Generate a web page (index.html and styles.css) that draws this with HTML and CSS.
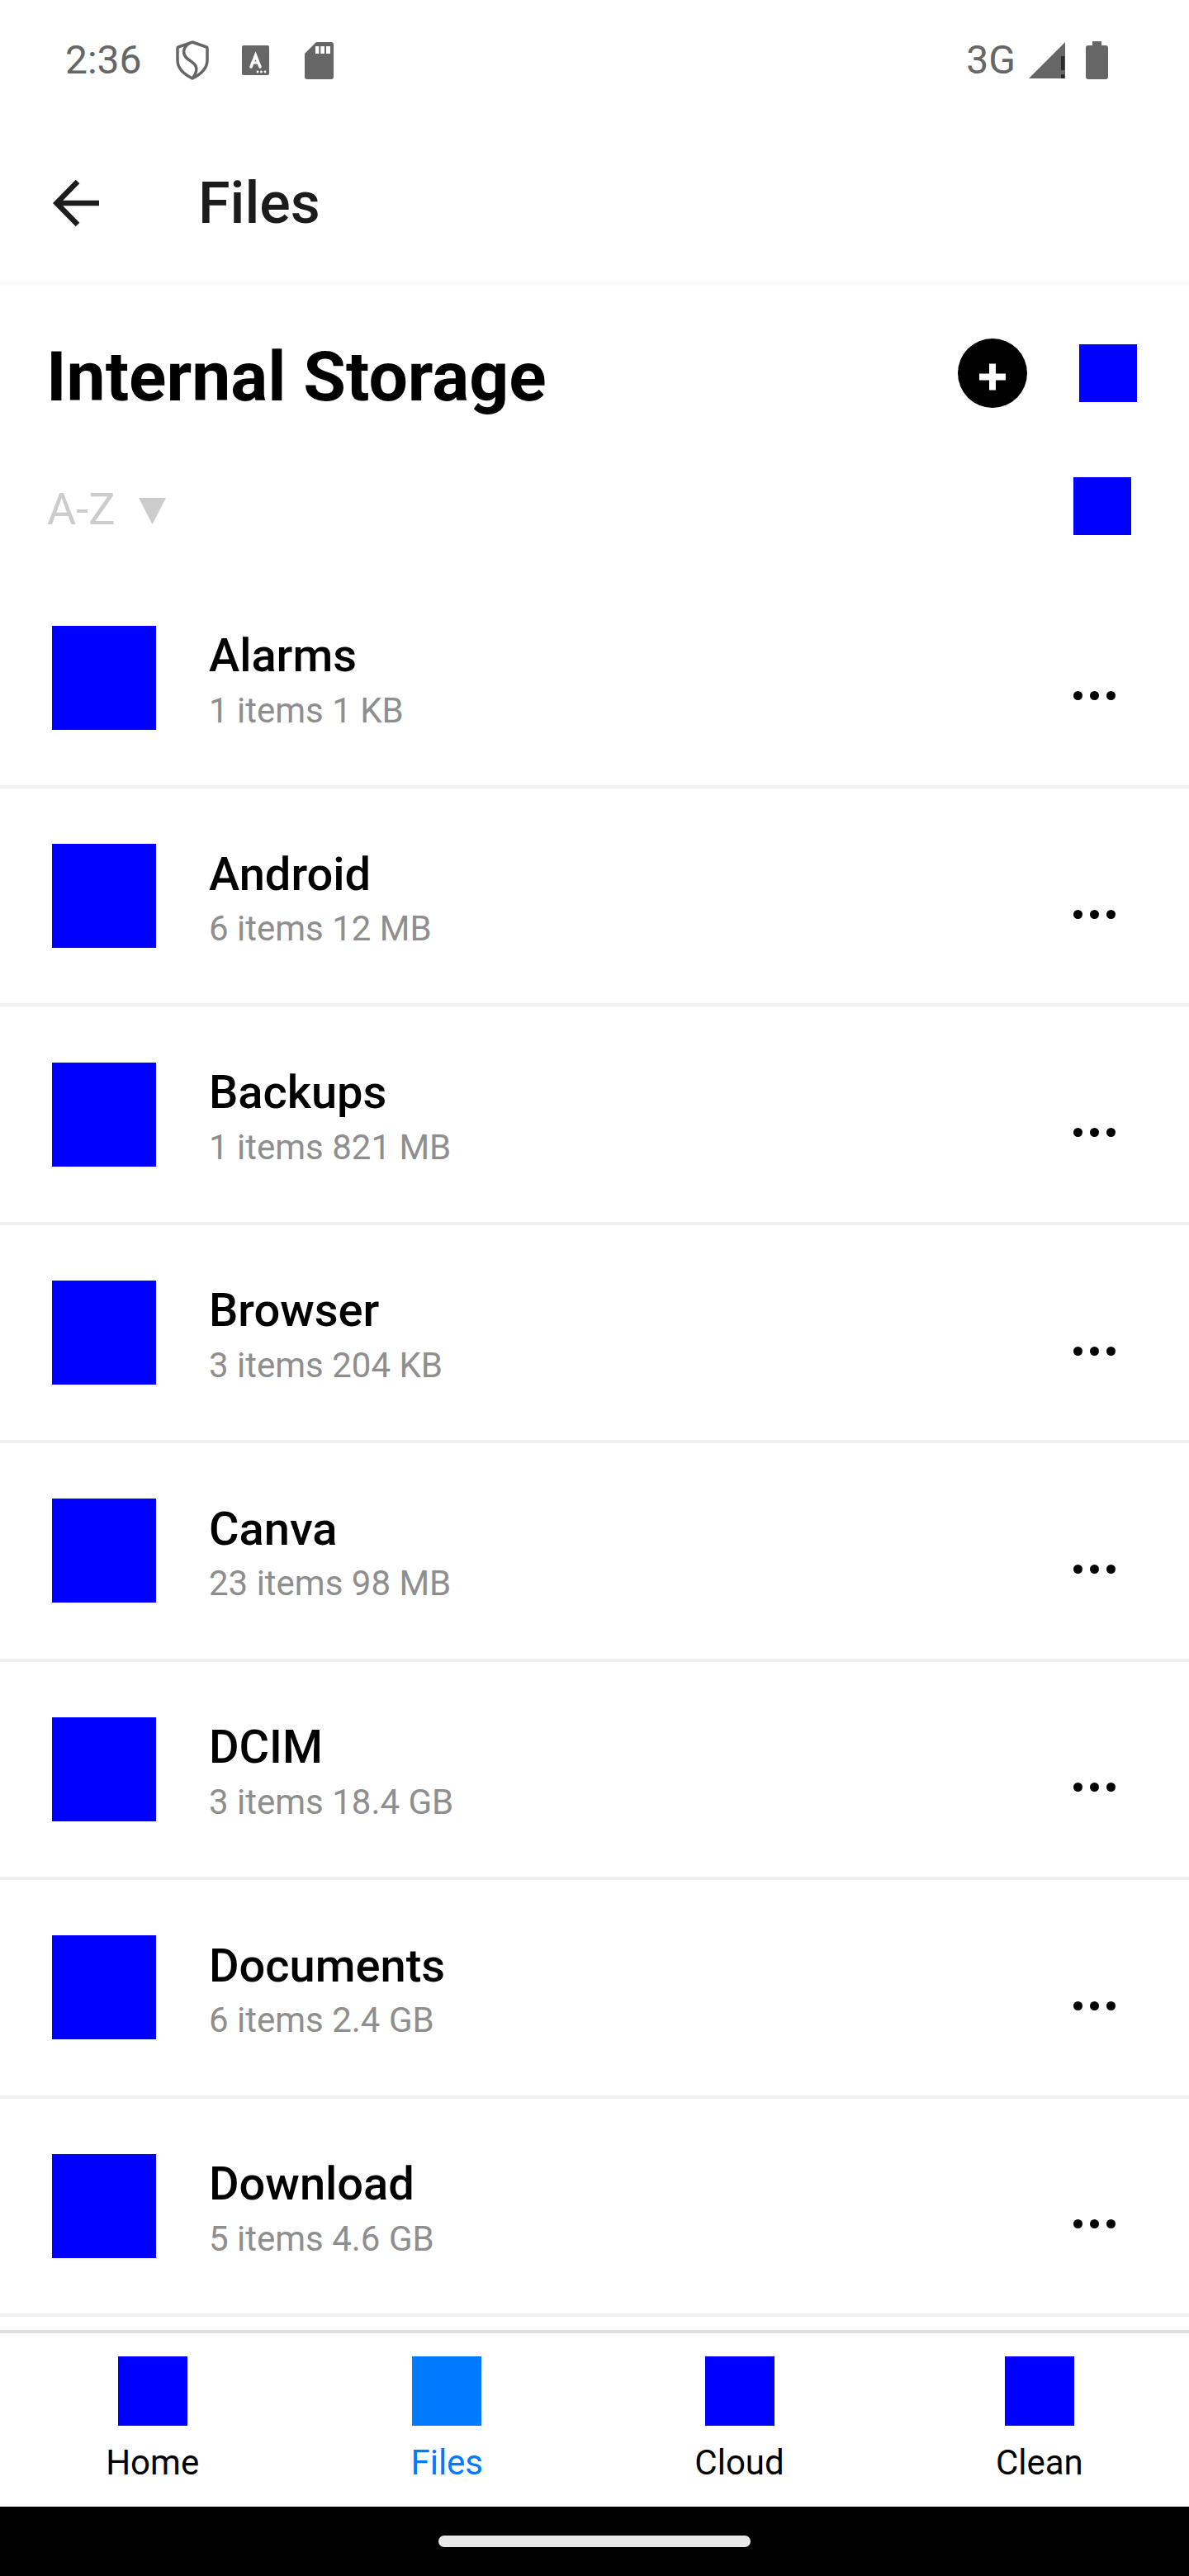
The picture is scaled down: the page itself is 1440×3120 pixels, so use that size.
FILE: index.html
```html
<!DOCTYPE html>
<html lang="en">
<head>
    <meta charset="UTF-8">
    <meta name="viewport" content="width=device-width, initial-scale=1.0">
    <title>Files</title>
    <link rel="stylesheet" href="styles.css">
</head>
<body>
    <div class="screen">
        <div class="status-bar">
            <div class="status-left">
                <span class="status-text">2:36</span>
                <svg class="ic-shield" viewBox="0 0 40 48"><path d="M20 2 37 8c1 0 1 1 1 2v14c0 10-8 17-18 22C10 41 2 34 2 24V10c0-1 0-2 1-2z" fill="none" stroke="#666" stroke-width="3.5"/><path d="M17 3C8 8 7 17 15 23c8 5 15 10 5 23" fill="none" stroke="#666" stroke-width="3.5"/></svg>
                <svg class="ic-keyboard" viewBox="0 0 33 36"><rect width="33" height="36" rx="2" fill="#666"/><path d="M11 26 16.500 12 22 26" fill="none" stroke="#fff" stroke-width="3.500" stroke-linecap="round"/><path d="M12.500 21h8" stroke="#fff" stroke-width="3"/><circle cx="19" cy="32" r="1.400" fill="#fff"/><circle cx="23.500" cy="32" r="1.400" fill="#fff"/><circle cx="28" cy="32" r="1.400" fill="#fff"/></svg>
                <svg class="ic-sd" viewBox="0 0 35 45"><path d="M14 0h18a3 3 0 0 1 3 3v39a3 3 0 0 1-3 3H3a3 3 0 0 1-3-3V14z" fill="#666"/><path d="M13 5h4.300v9H13zM19.300 5H24v9h-4.700zM26 5h5v9h-5z" fill="#fff"/></svg>
            </div>
            <div class="status-right">
                <span class="status-text">3G</span>
                <svg class="ic-signal" viewBox="0 0 44 44"><path d="M44 0v44H0z" fill="#666"/><path d="M39 17h4.300v17H39zM39 39h4.300v5H39z" fill="#2b2b2b"/></svg>
                <svg class="ic-battery" viewBox="0 0 27 46"><path d="M8 0h11v5h5a3 3 0 0 1 3 3v35a3 3 0 0 1-3 3H3a3 3 0 0 1-3-3V8a3 3 0 0 1 3-3h5z" fill="#666"/></svg>
            </div>
        </div>

        <div class="app-bar">
            <svg class="ic-back" viewBox="0 0 56 56"><path d="M56 28H5M30 2 4.500 28 30 54" fill="none" stroke="#1c1c1c" stroke-width="6.500"/></svg>
            <span class="app-title">Files</span>
        </div>

        <div class="page-head">
            <h1>Internal Storage</h1>
            <div class="add-btn"><svg viewBox="0 0 32 32"><path d="M12 0h8v12h12v8H20v12h-8V20H0v-8h12z" fill="#fff"/></svg></div>
            <div class="blue-box head-box"></div>
        </div>

        <div class="sort-row">
            <span class="sort-label">A-Z</span>
            <svg class="sort-caret" viewBox="0 0 33 32"><path d="M0 0h33L16.500 32z" fill="#ccc"/></svg>
            <div class="blue-box sort-box"></div>
        </div>

        <div class="file-list">
            <div class="file-row">
                <div class="blue-box file-icon"></div>
                <div class="file-info"><div class="file-name">Alarms</div><div class="file-meta">1 items 1 KB</div></div>
                <div class="more"><i></i><i></i><i></i></div>
            </div>
            <div class="file-row">
                <div class="blue-box file-icon"></div>
                <div class="file-info"><div class="file-name">Android</div><div class="file-meta">6 items 12 MB</div></div>
                <div class="more"><i></i><i></i><i></i></div>
            </div>
            <div class="file-row">
                <div class="blue-box file-icon"></div>
                <div class="file-info"><div class="file-name">Backups</div><div class="file-meta">1 items 821 MB</div></div>
                <div class="more"><i></i><i></i><i></i></div>
            </div>
            <div class="file-row">
                <div class="blue-box file-icon"></div>
                <div class="file-info"><div class="file-name">Browser</div><div class="file-meta">3 items 204 KB</div></div>
                <div class="more"><i></i><i></i><i></i></div>
            </div>
            <div class="file-row">
                <div class="blue-box file-icon"></div>
                <div class="file-info"><div class="file-name">Canva</div><div class="file-meta">23 items 98 MB</div></div>
                <div class="more"><i></i><i></i><i></i></div>
            </div>
            <div class="file-row">
                <div class="blue-box file-icon"></div>
                <div class="file-info"><div class="file-name">DCIM</div><div class="file-meta">3 items 18.4 GB</div></div>
                <div class="more"><i></i><i></i><i></i></div>
            </div>
            <div class="file-row">
                <div class="blue-box file-icon"></div>
                <div class="file-info"><div class="file-name">Documents</div><div class="file-meta">6 items 2.4 GB</div></div>
                <div class="more"><i></i><i></i><i></i></div>
            </div>
            <div class="file-row">
                <div class="blue-box file-icon"></div>
                <div class="file-info"><div class="file-name">Download</div><div class="file-meta">5 items 4.6 GB</div></div>
                <div class="more"><i></i><i></i><i></i></div>
            </div>
        </div>

        <div class="bottom-nav">
            <div class="nav-item"><div class="blue-box nav-icon"></div><span>Home</span></div>
            <div class="nav-item active"><div class="blue-box nav-icon"></div><span>Files</span></div>
            <div class="nav-item"><div class="blue-box nav-icon"></div><span>Cloud</span></div>
            <div class="nav-item"><div class="blue-box nav-icon"></div><span>Clean</span></div>
        </div>

        <div class="gesture-bar"><div class="gesture-handle"></div></div>
    </div>
</body>
</html>
```

FILE: styles.css
```css
* {
    box-sizing: border-box;
}
body {
    margin: 0;
    background: #fff;
    font-family: Roboto, "Liberation Sans", sans-serif;
    color: #000;
}
.screen {
    width: 1440px;
    height: 3120px;
    display: flex;
    flex-direction: column;
    overflow: hidden;
}
.blue-box {
    background: #0000ff;
    flex: none;
}

/* status bar */
.status-bar {
    height: 130px;
    padding: 16px 98px 0 79px;
    display: flex;
    justify-content: space-between;
    align-items: center;
}
.status-left,
.status-right {
    display: flex;
    align-items: center;
}
.status-text {
    font-size: 48px;
    line-height: 48px;
    color: #666;
}
.ic-shield {
    width: 40px;
    height: 48px;
    margin-left: 41px;
}
.ic-keyboard {
    width: 33px;
    height: 36px;
    margin-left: 40px;
}
.ic-sd {
    width: 35px;
    height: 45px;
    margin-left: 43px;
}
.ic-signal {
    width: 44px;
    height: 44px;
    margin-left: 16px;
}
.ic-battery {
    width: 27px;
    height: 46px;
    margin-left: 25px;
}

/* app bar */
.app-bar {
    height: 215px;
    display: flex;
    align-items: center;
    padding: 21px 0 0 64px;
    border-bottom: 5px solid #fafafa;
}
.ic-back {
    width: 56px;
    height: 56px;
}
.app-title {
    margin-left: 120px;
    font-size: 70px;
    font-weight: 500;
    color: #1c1c1c;
}

/* title and sort */
.page-head {
    height: 214px;
    display: flex;
    align-items: center;
    padding: 0 63px 0 56px;
}
.page-head h1 {
    margin: 8px auto 0 0;
    font-size: 84px;
    font-weight: 700;
}
.add-btn {
    width: 84px;
    height: 84px;
    border-radius: 50%;
    background: #000;
    display: flex;
    justify-content: center;
    align-items: center;
}
.add-btn svg {
    width: 32px;
    height: 33px;
    margin-top: 8px;
}
.head-box {
    width: 70px;
    height: 70px;
    margin-left: 63px;
}
.sort-row {
    height: 108px;
    display: flex;
    align-items: center;
    padding: 0 70px 0 57px;
}
.sort-label {
    margin-top: 7px;
    font-size: 54px;
    color: #ccc;
}
.sort-caret {
    width: 33px;
    height: 32px;
    margin: 12px 0 0 28px;
}
.sort-box {
    width: 70px;
    height: 70px;
    margin-left: auto;
}

/* list */
.file-list {
    flex: 1;
    padding-top: 23.6px;
}
.file-row {
    height: 264.43px;
    display: flex;
    align-items: center;
    padding: 0 89px 0 63px;
    border-bottom: 4px solid #f0f0f0;
}
.file-icon {
    width: 126px;
    height: 126px;
}
.file-info {
    margin-left: 64px;
    padding-top: 3.4px;
    flex: 1;
}
.file-name {
    font-size: 56px;
    line-height: 68px;
    font-weight: 500;
    margin-bottom: 8.6px;
}
.file-meta {
    font-size: 42px;
    line-height: 48px;
    color: #8e8e8e;
}
.more {
    display: flex;
    gap: 9px;
    margin-top: 44px;
}
.more i {
    display: block;
    width: 11px;
    height: 11px;
    border-radius: 50%;
    background: #000;
}

/* bottom nav */
.bottom-nav {
    height: 214px;
    display: flex;
    justify-content: space-around;
    padding-top: 28px;
    border-top: 4px solid #e0e0e0;
}
.nav-item {
    display: flex;
    flex-direction: column;
    align-items: center;
    font-size: 42px;
    line-height: 50px;
}
.nav-icon {
    width: 84px;
    height: 84px;
    margin-bottom: 20px;
}
.nav-item.active {
    color: #007aff;
}
.nav-item.active .nav-icon {
    background: #007aff;
}
.gesture-bar {
    height: 84px;
    background: #000;
    display: flex;
    justify-content: center;
    padding-top: 35px;
}
.gesture-handle {
    width: 378px;
    height: 14px;
    border-radius: 7px;
    background: #e8e8e8;
}
```
